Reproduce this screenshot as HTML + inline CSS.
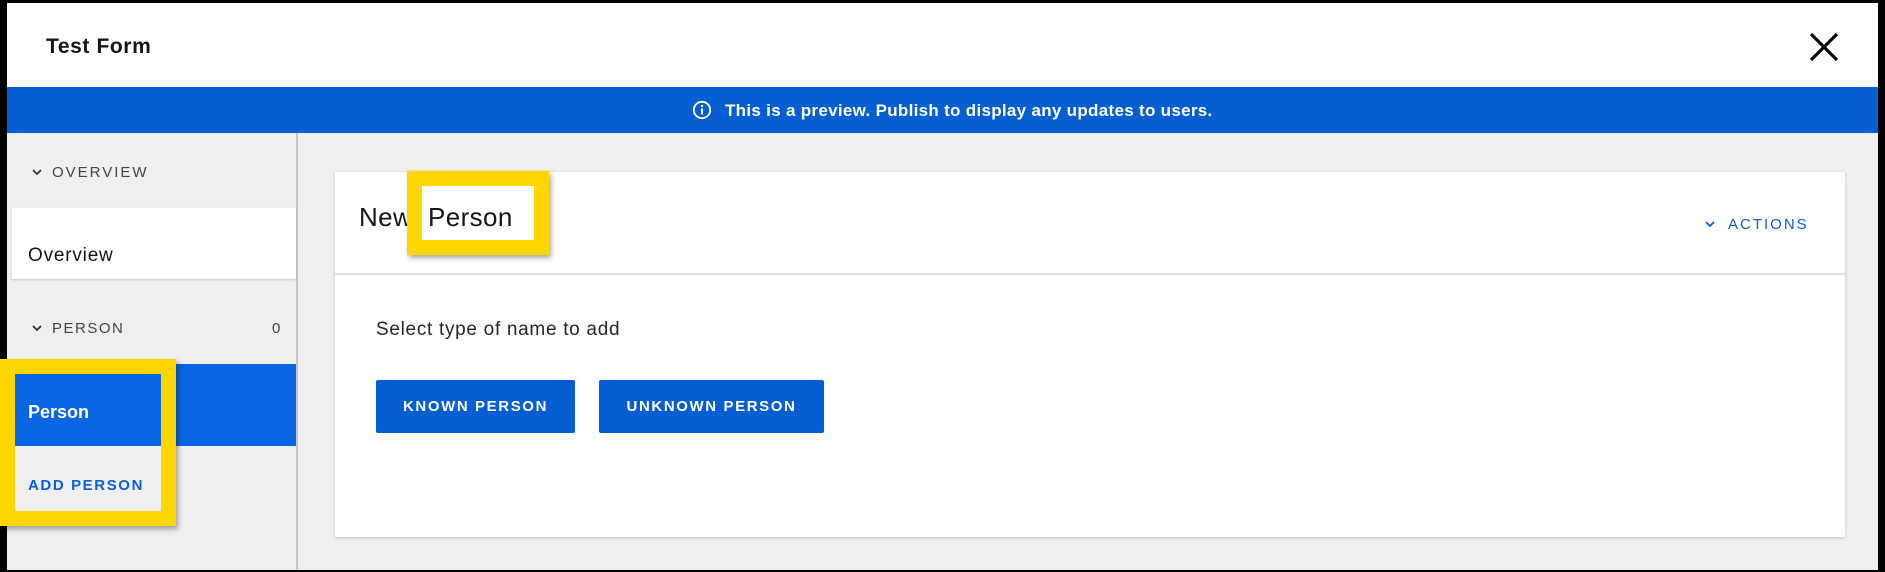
<!DOCTYPE html>
<html><head><meta charset="utf-8"><style>
*{margin:0;padding:0;box-sizing:border-box}
body{width:1885px;height:572px;background:#000;font-family:"Liberation Sans",sans-serif;position:relative;overflow:hidden}
.abs{position:absolute}
#frame{left:7px;top:3px;width:1871px;height:567px;background:#efefef;overflow:hidden}
.t{position:absolute;white-space:nowrap;line-height:1}
</style></head><body>
<div id="frame" class="abs">
  <div class="abs" style="left:0;top:0;width:1871px;height:84px;background:#fff"></div>
  <div class="t" style="left:39px;top:33px;font-size:21px;font-weight:bold;letter-spacing:0.6px;color:#161616">Test Form</div>
  <svg class="abs" style="left:1801px;top:28px" width="32" height="32" viewBox="0 0 32 32"><path d="M3 3L29 29M29 3L3 29" stroke="#000" stroke-width="3.2"/></svg>
  <div class="abs" style="left:0;top:84px;width:1871px;height:46px;background:#055fd3"></div>
  <svg class="abs" style="left:685px;top:97px" width="20" height="20" viewBox="0 0 20 20"><circle cx="10" cy="10" r="8.2" fill="none" stroke="#fff" stroke-width="1.8"/><rect x="9" y="8.5" width="2" height="6" fill="#fff"/><circle cx="10" cy="6" r="1.2" fill="#fff"/></svg>
  <div class="t" style="left:718px;top:99px;font-size:17px;letter-spacing:0.3px;font-weight:bold;color:#fff">This is a preview. Publish to display any updates to users.</div>
  <!-- sidebar -->
  <div class="abs" style="left:289px;top:130px;width:2px;height:440px;background:#c6c6c6"></div>
  <svg class="abs" style="left:24px;top:163px" width="12" height="12" viewBox="0 0 12 12"><path d="M2 4L6 8L10 4" fill="none" stroke="#333" stroke-width="1.8"/></svg>
  <div class="t" style="left:45px;top:162px;font-size:15px;letter-spacing:2px;color:#444">OVERVIEW</div>
  <div class="abs" style="left:5px;top:205px;width:284px;height:71px;background:#fff;box-shadow:0 1px 2px rgba(0,0,0,.15)"></div>
  <div class="t" style="left:21px;top:243px;font-size:19px;letter-spacing:0.8px;color:#161616">Overview</div>
  <svg class="abs" style="left:24px;top:319px" width="12" height="12" viewBox="0 0 12 12"><path d="M2 4L6 8L10 4" fill="none" stroke="#333" stroke-width="1.8"/></svg>
  <div class="t" style="left:45px;top:318px;font-size:15px;letter-spacing:1.5px;color:#444">PERSON</div>
  <div class="t" style="left:265px;top:318px;font-size:15px;color:#444">0</div>
  <div class="abs" style="left:0;top:361px;width:289px;height:82px;background:#0866e2"></div>
  <div class="t" style="left:21px;top:400px;font-size:18px;font-weight:bold;color:#fff">Person</div>
  <div class="abs" style="left:0;top:443px;width:155px;height:65px;background:#efefef"></div>
  <div class="t" style="left:21px;top:475px;font-size:15px;font-weight:bold;letter-spacing:1.6px;color:#0a5ed7">ADD PERSON</div>
  <!-- card -->
  <div class="abs" style="left:328px;top:169px;width:1510px;height:365px;background:#fff;box-shadow:0 1px 3px rgba(0,0,0,.2);border-radius:2px"></div>
  <div class="abs" style="left:328px;top:270px;width:1510px;height:2px;background:#e0e0e0"></div>
  <div class="t" style="left:352px;top:201px;font-size:26px;letter-spacing:0.4px;color:#161616">New Person</div>
  <div class="abs" style="left:400px;top:168px;width:142px;height:84px;border:15px solid #ffd600;box-shadow:2px 3px 5px rgba(0,0,0,.35)"></div>
  <div class="abs" style="left:415px;top:183px;width:112px;height:54px;background:#fff"></div>
  <div class="t" style="left:421px;top:201px;font-size:26px;letter-spacing:0.4px;color:#161616">Person</div>
  <svg class="abs" style="left:1697px;top:215px" width="12" height="12" viewBox="0 0 12 12"><path d="M2 4L6 8L10 4" fill="none" stroke="#0a5ed7" stroke-width="1.8"/></svg>
  <div class="t" style="left:1721px;top:214px;font-size:15px;letter-spacing:2px;color:#0a5ed7">ACTIONS</div>
  <div class="t" style="left:369px;top:317px;font-size:19px;letter-spacing:0.7px;color:#262626">Select type of name to add</div>
  <div class="abs" style="left:369px;top:377px;width:199px;height:53px;background:#055fd3;border-radius:2px"></div>
  <div class="t" style="left:369px;top:396px;width:199px;text-align:center;font-size:15px;font-weight:bold;letter-spacing:1.6px;color:#fff">KNOWN PERSON</div>
  <div class="abs" style="left:592px;top:377px;width:225px;height:53px;background:#055fd3;border-radius:2px"></div>
  <div class="t" style="left:592px;top:396px;width:225px;text-align:center;font-size:15px;font-weight:bold;letter-spacing:1.6px;color:#fff">UNKNOWN PERSON</div>
</div>
<div class="abs" style="left:0;top:359px;width:176px;height:167px;border:15px solid #ffd600;box-shadow:2px 3px 5px rgba(0,0,0,.35)"></div>
</body></html>
